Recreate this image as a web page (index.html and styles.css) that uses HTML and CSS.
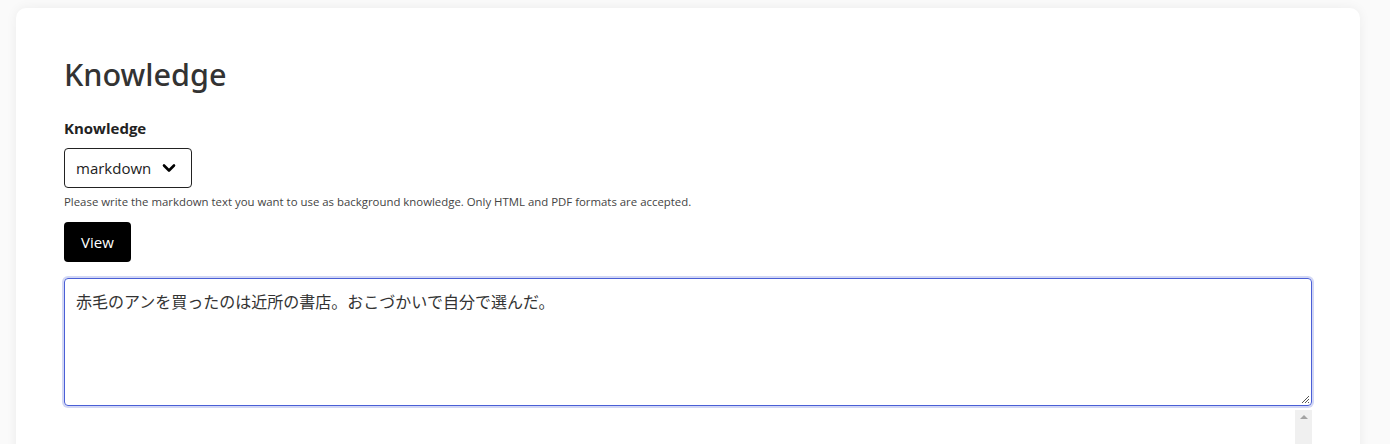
FILE: index.html
```html
<!DOCTYPE html>
<html lang="ja">
<head>
<meta charset="utf-8">
<link rel="stylesheet" href="styles.css">
</head>
<body>
<main class="card">
  <h1 class="title">Knowledge</h1>
  <div class="field">
    <label class="label">Knowledge</label>
    <div class="select">
      <span class="select-text">markdown</span>
      <svg class="chev" width="14" height="10" viewBox="0 0 14 10"><path d="M2 2.5 L7 7.5 L12 2.5" fill="none" stroke="#000" stroke-width="2.6" stroke-linecap="round" stroke-linejoin="round"/></svg>
    </div>
    <p class="help">Please write the markdown text you want to use as background knowledge. Only HTML and PDF formats are accepted.</p>
    <button class="btn">View</button>
    <div class="textarea">赤毛のアンを買ったのは近所の書店。おこづかいで自分で選んだ。<svg class="grip" width="10" height="10" viewBox="0 0 10 10"><path d="M9 2 L2 9 M9 5 L5 9 M9 8 L8 9" stroke="#555" stroke-width="1"/></svg></div>
    <div class="scrollrow"><div class="scroll"><span class="arrow"></span></div></div>
  </div>
</main>
</body>
</html>
```

FILE: styles.css
```css
html, body {
  margin: 0;
  padding: 0;
  background: #fafafa;
  height: 444px;
  overflow: hidden;
}
body {
  font-family: "Open Sans", "Noto Sans", "Noto Sans CJK JP", sans-serif;
  color: #333;
}
.card {
  margin: 8px 30px 0 16px;
  background: #fff;
  border-radius: 10px;
  box-shadow: 0 0 12px rgba(0,0,0,0.06);
  padding: 46px 48px 0;
  height: 480px;
  box-sizing: border-box;
  overflow: hidden;
}
.title {
  margin: 0;
  font-family: "Noto Sans", sans-serif;
  font-size: 30.6px;
  font-weight: 500;
  line-height: 40px;
  color: #333;
}
.field {
  margin-top: 24px;
  display: flex;
  flex-direction: column;
  align-items: flex-start;
}
.label {
  font-size: 15px;
  font-weight: 700;
  line-height: 20px;
  color: #222;
}
.select {
  margin-top: 10px;
  width: 128px;
  height: 40px;
  box-sizing: border-box;
  border: 1px solid #222;
  border-radius: 4px;
  display: flex;
  align-items: center;
  padding: 0 15px 0 11px;
  justify-content: space-between;
}
.select-text {
  font-size: 15px;
  color: #222;
}
.chev { display: block; }
.help {
  margin: 5px 0 0;
  font-size: 11.4px;
  line-height: 18px;
  color: #444;
}
.btn {
  margin-top: 11px;
  height: 40px;
  padding: 0 17px;
  background: #000;
  color: #fff;
  border: none;
  border-radius: 4px;
  font-family: inherit;
  font-size: 15px;
}
.textarea {
  position: relative;
  margin-top: 16px;
  width: 100%;
  height: 128px;
  box-sizing: border-box;
  border: 1px solid #4a5fd6;
  border-radius: 4px;
  box-shadow: 0 0 0 2px rgba(74,95,214,0.25);
  padding: 11px 11px;
  font-family: "Noto Sans CJK JP", sans-serif;
  font-size: 16px;
  line-height: 22px;
  color: #333;
}
.grip {
  position: absolute;
  right: 1px;
  bottom: 1px;
}
.scrollrow {
  width: 100%;
  display: flex;
  justify-content: flex-end;
  margin-top: 4px;
}
.scroll {
  width: 17px;
  height: 40px;
  background: #f0f0f0;
  display: flex;
  justify-content: center;
  padding-top: 5px;
  box-sizing: border-box;
}
.arrow {
  width: 0;
  height: 0;
  border-left: 4px solid transparent;
  border-right: 4px solid transparent;
  border-bottom: 4px solid #a3a3a3;
}
```
